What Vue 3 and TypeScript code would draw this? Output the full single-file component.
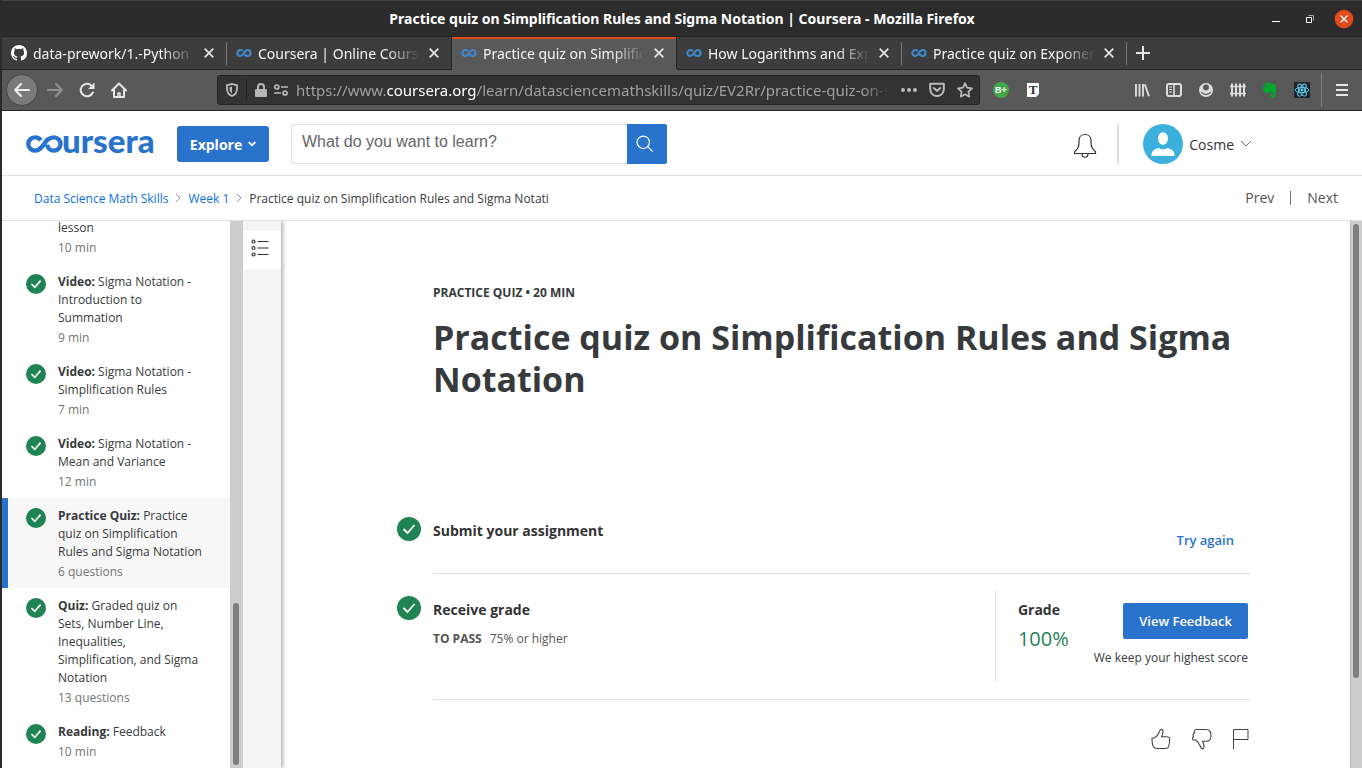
<script setup lang="ts">
import { ref } from 'vue'

interface Tab { title: string; icon: 'github' | 'coursera'; active?: boolean }
interface Lesson { kind: string; title: string; meta: string; current?: boolean; done: boolean }

const tabs: Tab[] = [
  { title: 'data-prework/1.-Python at', icon: 'github' },
  { title: 'Coursera | Online Courses', icon: 'coursera' },
  { title: 'Practice quiz on Simplification', icon: 'coursera', active: true },
  { title: 'How Logarithms and Exponents', icon: 'coursera' },
  { title: 'Practice quiz on Exponents', icon: 'coursera' },
]

const lessons: Lesson[] = [
  { kind: '', title: 'lesson', meta: '10 min', done: false },
  { kind: 'Video:', title: 'Sigma Notation - Introduction to Summation', meta: '9 min', done: true },
  { kind: 'Video:', title: 'Sigma Notation - Simplification Rules', meta: '7 min', done: true },
  { kind: 'Video:', title: 'Sigma Notation - Mean and Variance', meta: '12 min', done: true },
  { kind: 'Practice Quiz:', title: 'Practice quiz on Simplification Rules and Sigma Notation', meta: '6 questions', current: true, done: true },
  { kind: 'Quiz:', title: 'Graded quiz on Sets, Number Line, Inequalities, Simplification, and Sigma Notation', meta: '13 questions', done: true },
  { kind: 'Reading:', title: 'Feedback', meta: '10 min', done: true },
]

const query = ref('')
</script>

<template>
  <div class="window">
    <header class="titlebar">
      <span class="window-title">Practice quiz on Simplification Rules and Sigma Notation | Coursera - Mozilla Firefox</span>
      <div class="window-controls">
        <button aria-label="Minimize"><svg width="20" height="20" viewBox="0 0 20 20"><path d="M6 12.5h8" stroke="#fff" /></svg></button>
        <button aria-label="Restore"><svg width="20" height="20" viewBox="0 0 20 20" fill="none"><path d="M6.5 8.500h5v5h-5z" stroke="#fff" /><path d="M8.500 6.500h5v5" stroke="#aaa" /></svg></button>
        <button aria-label="Close"><svg width="20" height="20" viewBox="0 0 20 20"><circle cx="10" cy="10" r="9.300" fill="#e2491b" /><path d="M6.500 6.500l7 7M13.500 6.500l-7 7" stroke="#fff" stroke-width="1.400" /></svg></button>
      </div>
    </header>

    <nav class="tabs" aria-label="Tabs">
      <div v-for="tab in tabs" :key="tab.title" class="tab" :class="{ active: tab.active }">
        <svg v-if="tab.icon === 'github'" class="favicon" width="16" height="16" viewBox="0 0 16 16"><path fill="#fff" d="M8 0C3.580 0 0 3.580 0 8c0 3.540 2.290 6.530 5.470 7.590.4.070.55-.17.55-.38v-1.490c-2.010.37-2.530-.49-2.690-.94-.09-.23-.48-.94-.82-1.130-.28-.15-.68-.52-.01-.53.63-.01 1.080.58 1.230.82.72 1.210 1.870.87 2.330.66.07-.52.28-.87.51-1.070-1.780-.2-3.640-.89-3.640-3.950 0-.87.310-1.590.82-2.150-.08-.2-.36-1.020.08-2.120 0 0 .67-.21 2.200.82a7.600 7.600 0 0 1 4 0c1.530-1.040 2.200-.82 2.200-.82.44 1.100.16 1.920.08 2.120.51.56.82 1.270.82 2.150 0 3.070-1.870 3.750-3.650 3.950.29.25.54.73.54 1.480v2.200c0 .210.150.460.550.380A8 8 0 0 0 16 8c0-4.420-3.580-8-8-8z" /></svg>
        <svg v-else class="favicon" width="16" height="16" viewBox="0 0 16 16" fill="none" stroke="#4289cb" stroke-width="2.100"><path d="M6.800 5.900C6.100 5.200 5.300 5 4.400 5a3 3 0 0 0 0 6C8 11 7.800 5 11.600 5a3 3 0 0 1 0 6c-1.700 0-2.700-.9-3.200-2" /></svg>
        <span class="tab-title">{{ tab.title }}</span>
        <button class="tab-close" aria-label="Close tab"><svg width="10" height="10" viewBox="0 0 10 10"><path d="M.7.700l8.600 8.600M9.300.7L.7 9.300" stroke="#e6e6e6" stroke-width="1.700" /></svg></button>
      </div>
      <button class="new-tab" aria-label="New tab"><svg width="14" height="14" viewBox="0 0 14 14"><path d="M7 0v14M0 7h14" stroke="#e6e6e6" stroke-width="2" /></svg></button>
    </nav>

    <div class="toolbar">
      <div class="nav-buttons">
        <button class="back" aria-label="Back"><svg width="16" height="16" viewBox="0 0 16 16" fill="none" stroke="#eee" stroke-width="2" stroke-linecap="round" stroke-linejoin="round"><path d="M15 8H1.500M7 2L1.200 8 7 14" /></svg></button>
        <button aria-label="Forward"><svg width="16" height="16" viewBox="0 0 16 16" fill="none" stroke="#919191" stroke-width="2" stroke-linecap="round" stroke-linejoin="round"><path d="M1 8h13.500M9 2l5.800 6L9 14" /></svg></button>
        <button aria-label="Reload"><svg width="16" height="16" viewBox="0 0 16 16" fill="none" stroke="#e6e6e6" stroke-width="2"><path d="M13.800 10.500A6.300 6.300 0 1 1 12.300 3.400" stroke-linecap="round" /><path d="M15.500.500V7H9z" fill="#e6e6e6" stroke="none" /></svg></button>
        <button aria-label="Home"><svg width="16" height="16" viewBox="0 0 16 16" fill="none" stroke="#e6e6e6" stroke-width="2" stroke-linecap="round" stroke-linejoin="round"><path d="M1 8.500L8 1.500l7 7M3 8v7h10V8" /><path d="M7 14.500V11h2v3.500" stroke-width="1.500" /></svg></button>
      </div>

      <div class="urlbar">
        <button class="shield" aria-label="Tracking protection"><svg width="12" height="14" viewBox="0 0 12 14"><path d="M6 1l5 1.300v3.500C11 9.500 8.700 12 6 13 3.300 12 1 9.500 1 5.800V2.300z" fill="none" stroke="#bbb" stroke-width="1.800" /><path d="M6 3.500v7c-1.500-1-2.500-2.500-2.500-4.700V4.200z" fill="#bbb" /></svg></button>
        <button class="lock" aria-label="Site security"><svg width="12" height="14" viewBox="0 0 12 14"><rect y="6" width="12" height="8" rx="1.200" fill="#b5b5b5" /><path d="M3 7V4a3 3 0 0 1 6 0v3" fill="none" stroke="#b5b5b5" stroke-width="2" /></svg></button>
        <button class="perms" aria-label="Permissions"><svg width="14" height="12" viewBox="0 0 14 12" fill="none" stroke="#bbb" stroke-width="1.700"><circle cx="2.800" cy="3" r="2" /><circle cx="11" cy="9" r="2" /><path d="M7 3h7M0 9h7" /></svg></button>
        <div class="address" role="textbox" aria-label="Address" contenteditable="true" spellcheck="false">https://www.<b>coursera.org</b>/learn/datasciencemathskills/quiz/EV2Rr/practice-quiz-on-si</div>
        <button aria-label="Page actions"><svg width="16" height="16" viewBox="0 0 16 16" fill="#bbb"><circle cx="2" cy="8" r="2" /><circle cx="8" cy="8" r="2" /><circle cx="14" cy="8" r="2" /></svg></button>
        <button aria-label="Save to Pocket"><svg width="16" height="16" viewBox="0 0 16 16" fill="none" stroke="#bbb" stroke-width="2" stroke-linejoin="round" stroke-linecap="round"><path d="M1.200 1.800h13.600v5.500a6.800 6.800 0 0 1-13.600 0z" /><path d="M4.800 6L8 9l3.200-3" /></svg></button>
        <button aria-label="Bookmark"><svg width="16" height="16" viewBox="0 0 16 16" fill="none" stroke="#bbb" stroke-width="1.700" stroke-linejoin="round"><path d="M8 1.200l2 4.500 5 .6-3.600 3.400.9 5L8 12.300l-4.300 2.400.9-5L1 6.300l5-.6z" /></svg></button>
      </div>

      <div class="extensions left-ext">
        <button aria-label="B+ extension"><svg width="16" height="16" viewBox="0 0 16 16"><circle cx="8" cy="8" r="8" fill="#43a64a" /><text x="8" y="11" text-anchor="middle" font-family="Liberation Sans, sans-serif" font-weight="700" font-size="9" fill="#fff">B+</text></svg></button>
        <button aria-label="T extension"><svg width="16" height="16" viewBox="0 0 16 16"><path d="M2 1h12v11l-3 3H2z" fill="#fff" /><text x="8" y="12" text-anchor="middle" font-family="Liberation Serif, serif" font-weight="700" font-size="13" fill="#333">T</text></svg></button>
      </div>
      <div class="extensions right-ext">
        <button aria-label="Library"><svg width="16" height="16" viewBox="0 0 16 16" stroke="#ddd" stroke-width="1.900"><path d="M2 2v12.500M5.500 2v12.500M9 2v12.500M10.700 2.300l4.300 12" /></svg></button>
        <button aria-label="Sidebars"><svg width="16" height="16" viewBox="0 0 16 16" fill="none" stroke="#ddd"><rect x="1" y="2" width="14" height="12" rx="2" stroke-width="2" /><path d="M8 2v12" stroke-width="1.600" /><path d="M3 5h3M3 7.500h3M3 10h3" /></svg></button>
        <button aria-label="Account"><svg width="16" height="16" viewBox="0 0 16 16"><circle cx="8" cy="8" r="7" fill="#ddd" /><path d="M5 5.500a3 3 0 0 1 6 0c0 4-6 4-6 0zM3.300 9.300c1.200 3.200 8.200 3.200 9.400 0l.3 1.200c-1.500 3.300-8.500 3.300-10 0z" fill="#595959" /></svg></button>
        <button aria-label="Fence extension"><svg width="16" height="16" viewBox="0 0 16 16" stroke="#ddd" fill="none"><path d="M2 1.500v13M6 1.500v13M10 1.500v13M14 1.500v13" stroke-width="2" /><path d="M0 4.500h16M0 11.500h16" stroke-width="1.300" /></svg></button>
        <button aria-label="Evernote"><svg width="16" height="16" viewBox="0 0 16 16" fill="#00a82d"><path d="M5 0c2.500 0 2.500 1 3 1.500 2 0 5 0 5.500 1.500 1 3 .8 9-.7 12-.8 1.200-4.300 1.300-4.300-1.200 0-2 2-2.300 2.500-1.500v1h.8c.5-1 .2-2.500-1-2.500-1.300 0-2 0-2.500-1C7 11 2.500 11.500 1.500 9 .7 7 .8 5 1 4.500h4z" /><path d="M1.300 3.700L4.300.6v3.100z" /></svg></button>
        <button aria-label="React tools"><svg width="16" height="16" viewBox="0 0 16 16"><path d="M0 0h16v16H0z" fill="#20232a" /><g fill="none" stroke="#61dafb" stroke-width=".9"><ellipse cx="8" cy="8" rx="6.800" ry="2.700" /><ellipse cx="8" cy="8" rx="6.800" ry="2.700" transform="rotate(60 8 8)" /><ellipse cx="8" cy="8" rx="6.800" ry="2.700" transform="rotate(120 8 8)" /></g><circle cx="8" cy="8" r="1.400" fill="#61dafb" /></svg></button>
      </div>
      <button class="menu" aria-label="Menu"><svg width="12" height="12" viewBox="0 0 12 12" stroke="#e6e6e6" stroke-width="2"><path d="M0 1h12M0 6h12M0 11h12" /></svg></button>
    </div>

    <div class="page">
      <header class="site-header">
        <a class="logo" href="#" aria-label="coursera"><svg width="38" height="18" viewBox="0 0 38 18" fill="none" stroke="#2a73cc" stroke-width="4.400"><path d="M14.800 5.200C13.400 3.200 11 2.400 8.900 2.400a6.500 6.500 0 0 0 0 13.200C18.500 15.600 17.500 2.400 28 2.400a6.600 6.600 0 0 1 0 13.200c-4 0-6.500-2.600-6.800-6" /></svg><span>ursera</span></a>
        <button class="explore">Explore<svg width="8" height="6" viewBox="0 0 8 6" fill="none" stroke="#fff" stroke-width="1.800"><path d="M.7 1L4 4.300 7.300 1" /></svg></button>
        <form class="search" @submit.prevent>
          <input v-model="query" type="text" aria-label="Search courses" placeholder="What do you want to learn?" />
          <button aria-label="Search"><svg width="18" height="18" viewBox="0 0 18 18" fill="none" stroke="#fff" stroke-width="1.200"><circle cx="7.300" cy="7.300" r="6.200" /><path d="M11.700 11.700l5 5" /></svg></button>
        </form>
        <button class="bell" aria-label="Notifications"><svg width="24" height="26" viewBox="0 0 24 26" fill="none" stroke="#333" stroke-width="1.200"><path d="M1.500 20.500v-1.800C5 16 6 13.500 6 10V7.500C6 3.800 8.500 1.500 12 1.500s6 2.300 6 6V10c0 3.500 1 6 4.500 8.700v1.800zM9 20.500c0 5 6 5 6 0" /></svg></button>
        <button class="user">
          <svg width="40" height="40" viewBox="0 0 40 40"><circle cx="20" cy="20" r="20" fill="#3bb0dd" /><ellipse cx="20" cy="14.500" rx="5" ry="6.300" fill="#fff" /><path d="M8.500 32c0-5 2-6.500 7-8 2.500 1.800 6.500 1.800 9 0 5 1.500 7 3 7 8z" fill="#fff" /></svg>
          <span>Cosme</span>
          <svg width="12" height="8" viewBox="0 0 12 8" fill="none" stroke="#777" stroke-width="1"><path d="M1 1l5 5 5-5" /></svg>
        </button>
      </header>

      <nav class="crumbs" aria-label="Breadcrumb">
        <a href="#">Data Science Math Skills</a>
        <svg width="6" height="10" viewBox="0 0 6 10" fill="none" stroke="#999"><path d="M1 1l4 4-4 4" /></svg>
        <a href="#">Week 1</a>
        <svg width="6" height="10" viewBox="0 0 6 10" fill="none" stroke="#999"><path d="M1 1l4 4-4 4" /></svg>
        <span>Practice quiz on Simplification Rules and Sigma Notati</span>
        <div class="pager"><a href="#">Prev</a><a href="#">Next</a></div>
      </nav>

      <div class="body">
        <aside class="sidebar">
          <a v-for="l in lessons" :key="l.kind + l.title" href="#" class="lesson" :class="{ current: l.current }">
            <span class="mark"><svg v-if="l.done" width="20" height="20" viewBox="0 0 24 24"><circle cx="12" cy="12" r="12" fill="#1f8354" /><path d="M6.500 12l4 4 7-8" fill="none" stroke="#fff" stroke-width="2" /></svg></span>
            <span class="lesson-text">
              <span class="lesson-title"><b v-if="l.kind">{{ l.kind }}</b> {{ l.title }}</span>
              <span class="meta">{{ l.meta }}</span>
            </span>
          </a>
        </aside>
        <div class="track side-track"><div class="thumb"></div></div>
        <div class="rail">
          <button aria-label="Toggle outline"><svg width="18" height="18" viewBox="0 0 18 18" fill="none" stroke="#333" stroke-width="1.200"><circle cx="2.500" cy="2.500" r="1.500" /><circle cx="2.500" cy="9" r="1.500" /><circle cx="2.500" cy="15.500" r="1.500" /><path d="M6.500 2.500h11M6.500 9h11M6.500 15.500h11" /></svg></button>
        </div>

        <main class="content">
          <div class="intro">
            <p class="eyebrow">PRACTICE QUIZ • 20 MIN</p>
            <h1>Practice quiz on Simplification Rules and Sigma Notation</h1>
          </div>

          <section class="step">
            <svg class="step-mark" width="24" height="24" viewBox="0 0 24 24"><circle cx="12" cy="12" r="12" fill="#1f8354" /><path d="M6.500 12l4 4 7-8" fill="none" stroke="#fff" stroke-width="1.800" /></svg>
            <div class="step-body submit">
              <h2>Submit your assignment</h2>
              <button class="try">Try again</button>
            </div>
          </section>

          <section class="step">
            <svg class="step-mark" width="24" height="24" viewBox="0 0 24 24"><circle cx="12" cy="12" r="12" fill="#1f8354" /><path d="M6.500 12l4 4 7-8" fill="none" stroke="#fff" stroke-width="1.800" /></svg>
            <div class="step-body receive">
              <div class="receive-info">
                <h2>Receive grade</h2>
                <p class="pass"><b>TO PASS</b><span>75% or higher</span></p>
              </div>
              <div class="result">
                <div class="grade"><h2>Grade</h2><span class="score">100%</span></div>
                <div class="feedback"><button class="primary">View Feedback</button><p>We keep your highest score</p></div>
              </div>
            </div>
          </section>

          <div class="reactions">
            <button aria-label="Like"><svg width="20" height="22" viewBox="0 0 20 22" fill="none" stroke="#444" stroke-width="1.100" stroke-linejoin="round"><path d="M1 10h2.500C6 8.500 7.500 6 8.500 3.500 9 1.500 10.500 1 11.500 1.800c1 1.200.4 4-1 7H16c3 0 3.200 2 2.300 3.700.7 1.300.4 2.800-.3 3.800.2 3-1.500 4.200-4 4.200H6c-3.500 0-5-2.500-5-10.500z" /></svg></button>
            <button aria-label="Dislike"><svg width="20" height="22" viewBox="0 0 20 22" fill="none" stroke="#444" stroke-width="1.100" stroke-linejoin="round"><path d="M1 12h2.500C6 13.500 7.500 16 8.500 18.500c.5 2 2 2.500 3 1.700 1-1.200.4-4-1-7H14c3.500 0 5-2 5-5.500 0-4-1.500-6.200-5-6.200H5c-3 0-3 2-2.500 3C1 6 1 7.500 1.500 8.500.5 9.500.5 11 1 12z" /></svg></button>
            <button aria-label="Report"><svg width="16" height="22" viewBox="0 0 16 22" fill="none" stroke="#444"><path d="M.5 21V1.500h14.500v10H.5" /></svg></button>
          </div>
        </main>
        <div class="track main-track"><div class="thumb"></div></div>
      </div>
    </div>
  </div>
</template>

<style>
body { margin: 0; overflow: hidden; }
</style>

<style scoped>
* { box-sizing: border-box; }
button { border: 0; padding: 0; background: none; font: inherit; color: inherit; display: flex; align-items: center; justify-content: center; flex: none; cursor: pointer; }
a { text-decoration: none; }
svg { display: block; flex: none; }
h1, h2, p { margin: 0; }
.window { height: 100vh; display: flex; flex-direction: column; border-left: 2px solid #2b2b2b; background: #fff; font-family: "Open Sans", "Noto Sans", sans-serif; color: #373a3c; }

.titlebar { height: 37px; flex: none; display: grid; grid-template-columns: 100px 1fr 100px; align-items: center; background: #2c2c2c; border-top: 1px solid #3f3f3f; border-bottom: 1px solid #242424; color: #fff; font-family: "Noto Sans", sans-serif; font-size: 14px; font-weight: 700; }
.window-title { grid-column: 2; text-align: center; white-space: nowrap; }
.window-controls { display: flex; gap: 14px; justify-content: flex-end; padding-right: 8px; }

.tabs { height: 33px; flex: none; display: flex; background: #3d3d3d; color: #f5f5f5; font-family: "Noto Sans", sans-serif; font-size: 14px; border-bottom: 1px solid #252525; }
.tab { width: 225px; display: flex; align-items: center; padding: 0 13px 0 9px; position: relative; }
.tab::after { content: ""; position: absolute; right: 0; top: 5px; bottom: 4px; width: 1px; background: #777; }
.tab.active { background: #595959; box-shadow: inset 0 2px #e2491b, 0 1px #595959; }
.tab.active::after, .tab:has(+ .active)::after { top: 0; bottom: 0; background: #252525; }
.favicon { margin-right: 6px; }
.tab-title { flex: 1; min-width: 0; overflow: hidden; white-space: nowrap; mask-image: linear-gradient(to right, #000 calc(100% - 36px), transparent calc(100% - 2px)); }
.tab-close { margin-left: 7px; }
.new-tab { width: 32px; }

.toolbar { height: 41px; flex: none; display: flex; align-items: center; background: #595959; border-bottom: 1px solid #252525; }
.nav-buttons { display: flex; align-items: center; padding-left: 4px; }
.nav-buttons button { width: 32px; height: 32px; }
.nav-buttons .back { border-radius: 50%; background: #7a7a7a; border: 1px solid #454545; margin-right: 1px; }
.urlbar { flex: 1; min-width: 0; height: 30px; margin-left: 82px; display: flex; align-items: center; background: #333; border: 1px solid #222; border-radius: 3px; padding-right: 6px; gap: 12px; }
.shield { width: 29px; height: 22px; border-right: 1px solid #222; }
.lock { margin-left: -4px; }
.perms { margin-left: -5px; }
.address { flex: 1; min-width: 0; margin: 0 -4px; overflow: hidden; white-space: nowrap; font-family: "Noto Sans", sans-serif; font-size: 15px; line-height: 24px; color: #a0a0a0; outline: none; mask-image: linear-gradient(to right, #000 calc(100% - 30px), transparent calc(100% - 4px)); }
.address b { font-weight: 400; color: #fff; }
.extensions { display: flex; gap: 16px; }
.left-ext { margin-left: 13px; flex: 0 0 141px; }
.menu { width: 41px; height: 34px; border-left: 1px solid #7c7c7c; margin-left: 11px; }

.page { flex: 1; min-height: 0; display: flex; flex-direction: column; background: #fff; }
.site-header { height: 65px; flex: none; display: flex; align-items: center; padding: 2px 110px 0 24px; border-bottom: 1px solid #e1e1e1; }
.logo { display: flex; align-items: center; color: #2a73cc; font-family: Lato, sans-serif; font-weight: 900; font-size: 33px; line-height: 32px; width: 129px; }
.logo span { margin: -8px 0 0 -2px; }
.explore { width: 92px; height: 36px; margin-left: 22px; background: #2a73cc; color: #fff; border-radius: 3px; font-size: 14px; font-weight: 700; gap: 6px; }
.search { display: flex; width: 376px; height: 40px; margin-left: 22px; }
.search input { flex: 1; min-width: 0; border: 1px solid #ddd; border-right: 0; border-radius: 2px 0 0 2px; padding: 0 10px 5px; font: 16px "Liberation Sans", sans-serif; color: #333; outline: none; }
.search input::placeholder { color: #666; opacity: 1; }
.search button { width: 40px; background: #2a73cc; border-radius: 0 2px 2px 0; padding-right: 4px; }
.bell { margin-left: auto; padding: 4px 20px 0 0; height: 40px; border-right: 2px solid #ddd; }
.user { margin-left: 24px; gap: 6px; font-size: 14px; color: #333; }

.crumbs { height: 45px; flex: none; display: flex; align-items: center; padding: 0 24px 0 32px; gap: 7px; font-size: 12px; border-bottom: 1px solid #e1e1e1; }
.crumbs a { color: #0d6fe5; }
.pager { margin-left: auto; display: flex; align-items: center; font-size: 14px; }
.crumbs .pager a { color: #555; line-height: 14px; }
.pager a + a { border-left: 1px solid #777; margin-left: 16px; padding-left: 16px; }

.body { flex: 1; min-height: 0; display: flex; }
.sidebar { width: 228px; flex: none; display: flex; flex-direction: column; justify-content: flex-end; overflow: hidden; font-size: 12px; line-height: 18px; }
.lesson { flex: none; display: flex; padding: 9px 24px 7px 18px; border-left: 6px solid transparent; color: #373a3c; }
.lesson.current { background: #f7f7f7; border-left-color: #2a73cc; }
.mark { width: 32px; flex: none; padding-top: 1px; }
.lesson-text { display: flex; flex-direction: column; gap: 2px; }
.meta { color: #757575; }
.track { flex: none; background: #cdcdcd; display: flex; flex-direction: column; align-items: center; padding: 3px 0; }
.thumb { width: 6px; border-radius: 3px; background: #7c7f7f; }
.side-track { width: 13px; justify-content: flex-end; padding-right: 1px; }
.side-track .thumb { height: 30%; }
.main-track { width: 12px; border-left: 1px solid #bbb; padding-right: 1px; }
.main-track .thumb { height: 84%; }
.rail { width: 38px; flex: none; background: #f5f5f5; padding-top: 10px; box-shadow: 2px 0 4px rgba(0, 0, 0, .3); clip-path: inset(0 -8px 0 0); }
.rail button { width: 38px; height: 38px; background: #fff; padding: 0 4px 4px 0; }

.content { flex: 1; min-width: 0; overflow: hidden; padding: 63px 100px 0 116px; }
.intro { padding-left: 36px; height: 233px; }
.eyebrow { font-size: 12px; font-weight: 700; line-height: 18px; }
h1 { margin-top: 14px; font-size: 34px; line-height: 42px; font-weight: 700; }
h2 { font-size: 14px; line-height: 20px; font-weight: 700; color: #333; }
.step { display: flex; align-items: flex-start; }
.step-mark { margin-right: 12px; }
.step-body { flex: 1; border-bottom: 1px solid #e1e1e1; display: flex; justify-content: space-between; }
.submit { height: 57px; padding-top: 4px; margin-bottom: 17px; }
.try { height: 36px; padding: 0 16px; margin-top: 1px; color: #2a73cc; font-size: 13px; font-weight: 600; }
.step + .step .step-mark { margin-top: 5px; }
.receive { height: 109px; padding-bottom: 18px; }
.receive-info { padding-top: 9px; }
.pass { display: flex; gap: 8px; margin-top: 9px; font-size: 12px; line-height: 20px; color: #555; }
.result { display: flex; border-left: 1px solid #ddd; padding: 9px 2px 0 22px; gap: 25px; }
.grade { display: flex; flex-direction: column; }
.score { font-size: 20px; line-height: 28px; margin-top: 5px; color: #1f8354; }
.feedback { display: flex; flex-direction: column; align-items: flex-end; padding-top: 3px; font-size: 12px; line-height: 18px; }
.primary { height: 36px; padding: 0 16px; background: #2a73cc; color: #fff; border-radius: 2px; font-size: 13px; font-weight: 600; }
.feedback p { margin-top: 10px; }
.reactions { display: flex; justify-content: flex-end; gap: 21px; padding: 28px 1px 0 0; }
</style>
